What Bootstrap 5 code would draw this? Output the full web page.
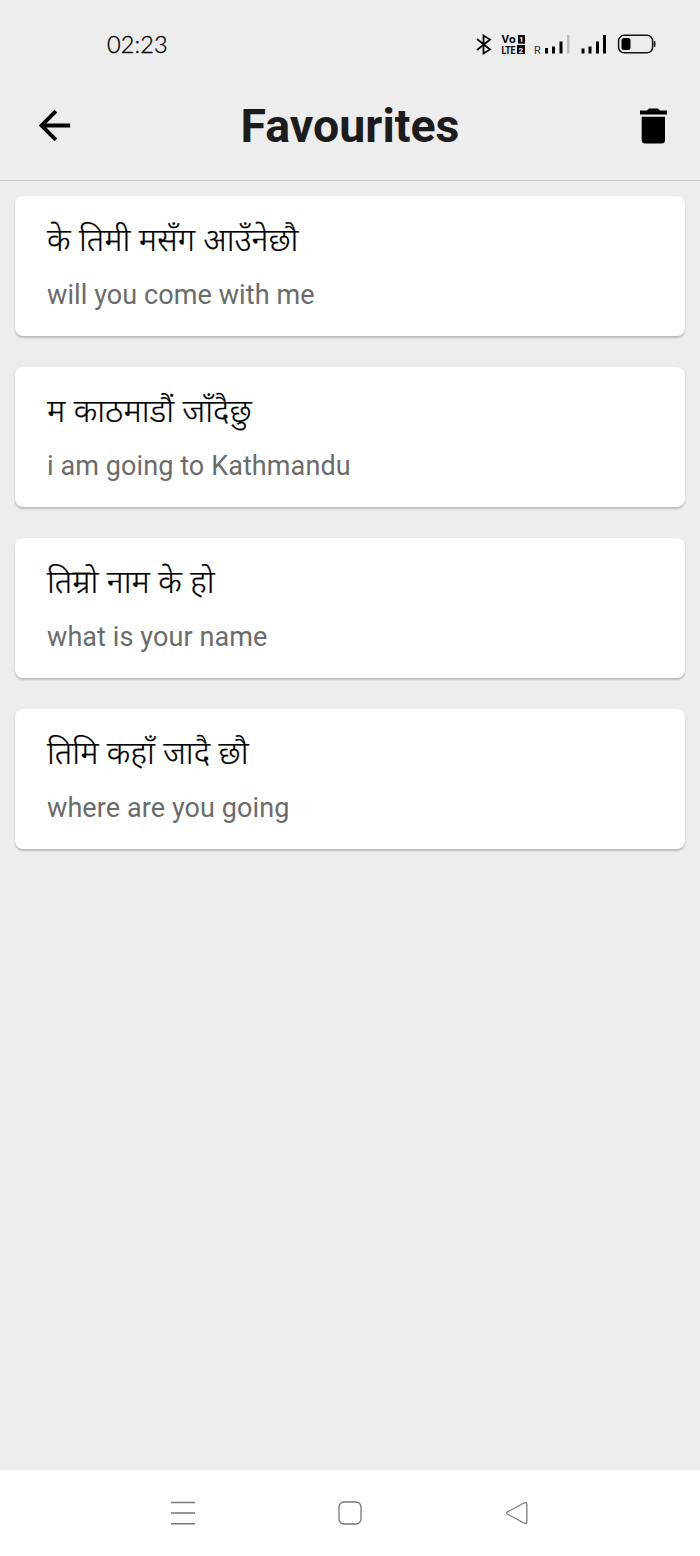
<!DOCTYPE html>
<html lang="ne">
<head>
<meta charset="utf-8">
<meta name="viewport" content="width=device-width, initial-scale=1">
<title>Favourites</title>
<link href="https://cdn.jsdelivr.net/npm/bootstrap@5.3.0/dist/css/bootstrap.min.css" rel="stylesheet">
<style>
body{background:#ededed;font-family:Roboto,"Noto Sans Devanagari","Noto Sans",sans-serif;color:#000}
svg{display:block;flex:none}
.statusbar{height:72px;padding:16px 44px 0 107px}
.clock{font:300 23.5px/56px Lato,"Noto Sans",sans-serif;letter-spacing:.1px;-webkit-text-stroke:.35px #000;padding-bottom:1px}
.appbar{height:109px;padding:0 31px 1px;border-bottom:1px solid #c6c6c6}
.appbar h1{font-size:46.5px;font-weight:700;line-height:56px;color:#1c1c1c}
.phrases{padding:15px 15px 0;gap:31px}
.phrase{height:140px;border:0;border-radius:8px;padding:0 32px;box-shadow:0 2px 2px rgba(0,0,0,.2),0 0 1px rgba(0,0,0,.1)}
.phrase h2{font-family:"Noto Sans Devanagari","Noto Sans",sans-serif;font-size:32.4px;font-weight:300;line-height:40px;margin:27px 0 0;white-space:nowrap;-webkit-text-stroke:.2px #000}
.phrase p{font-size:27px;line-height:36px;margin:14px 0 0;color:#6b6b6b;letter-spacing:.09px;white-space:nowrap}
.navkeys{height:86px;padding:0 170px}
</style>
</head>
<body>
<div class="vh-100 d-flex flex-column overflow-hidden">
  <div class="statusbar d-flex justify-content-between align-items-center">
    <span class="clock">02:23</span>
    <svg width="180" height="24" viewBox="476 32 180 24" font-family="Roboto,sans-serif">
      <path d="M477 39l13 10.500-6.500 4V35.500l6.500 4-13 10.500" fill="none" stroke="#000" stroke-width="1.800"/>
      <g font-weight="700">
        <text x="501.500" y="43" font-size="10.500" textLength="14" lengthAdjust="spacingAndGlyphs">Vo</text>
        <text x="501.500" y="54" font-size="10.500" textLength="14" lengthAdjust="spacingAndGlyphs">LTE</text>
        <rect x="518" y="35" width="7" height="8.600"/>
        <rect x="517" y="45" width="8" height="9"/>
        <text x="519" y="42.300" font-size="8" fill="#fff">1</text>
        <text x="518.600" y="52.600" font-size="8" fill="#fff">2</text>
      </g>
      <text x="534" y="54" font-size="11" fill="#333">R</text>
      <path d="M545 48h3v5.500h-3zM552 46.500h3v7h-3zM559.500 41.500h3v12h-3zM581.500 48.500h3v5h-3zM588.500 46.500h3v7h-3zM596 41.500h3v12h-3zM603 35h3v18.500h-3z"/>
      <path d="M567 35h2.500v18.500H567z" fill="#bbb"/>
      <rect x="618.600" y="35.300" width="34" height="17.500" rx="5.500" fill="none" stroke="#111" stroke-width="1.500"/>
      <rect x="621.500" y="38" width="9" height="12" rx="2.500"/>
      <path d="M653.800 41.300h1.600v5.400h-1.600z"/>
    </svg>
  </div>

  <header class="appbar d-flex justify-content-between align-items-center">
    <svg width="47" height="47" viewBox="0 0 24 24" role="img" aria-label="Back"><path d="M20 11H7.830l5.590-5.590L12 4l-8 8 8 8 1.410-1.410L7.830 13H20z"/></svg>
    <h1 class="m-0">Favourites</h1>
    <svg width="47" height="36" viewBox="622 107.500 47 36" role="img" aria-label="Delete all"><path d="M640 110h7l2-2h9l2 2h7v4h-27zM641.700 116.200h23.300v23.300a3.500 3.500 0 0 1-3.500 3.500h-16.300a3.500 3.500 0 0 1-3.500-3.500z"/></svg>
  </header>

  <main class="phrases d-flex flex-column flex-grow-1">
    <article class="card phrase"><h2>के तिमी मसँग आउँनेछौ</h2><p lang="en">will you come with me</p></article>
    <article class="card phrase"><h2>म काठमाडौं जाँदैछु</h2><p lang="en">i am going to Kathmandu</p></article>
    <article class="card phrase"><h2>तिम्रो नाम के हो</h2><p lang="en">what is your name</p></article>
    <article class="card phrase"><h2>तिमि कहाँ जादै छौ</h2><p lang="en">where are you going</p></article>
  </main>

  <nav class="navkeys bg-white d-flex justify-content-between align-items-center">
    <svg width="26" height="26" fill="none" stroke="#777" stroke-width="1.500"><path d="M1 2.500h24M1 13h24M1 23.800h24"/></svg>
    <svg width="26" height="26" fill="none" stroke="#777" stroke-width="1.300"><rect x="2" y="2" width="22" height="22" rx="5"/></svg>
    <svg width="26" height="26" fill="none" stroke="#777" stroke-width="1.300"><path d="M3.700 11.800L20.500 2.800q2.300-1 2.300 1.200v18q0 2.200-2.300 1.200L3.700 14.200q-2-1.200 0-2.400z"/></svg>
  </nav>
</div>
<script src="https://cdn.jsdelivr.net/npm/bootstrap@5.3.0/dist/js/bootstrap.bundle.min.js"></script>
</body>
</html>
